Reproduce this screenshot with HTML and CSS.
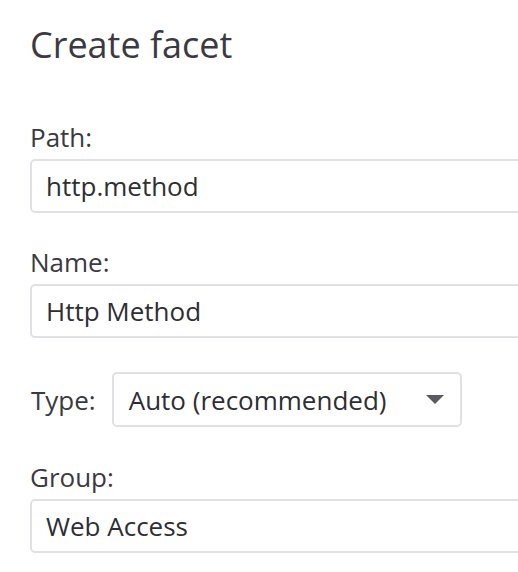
FILE: index.html
```html
<!DOCTYPE html>
<html>
<head>
<meta charset="utf-8">
<link rel="stylesheet" href="styles.css">
</head>
<body>
<div class="panel">
  <h1 class="title">Create facet</h1>
  <div class="field field-path">
    <label class="label">Path:</label>
    <input class="text-input" type="text" value="http.method">
  </div>
  <div class="field field-name">
    <label class="label">Name:</label>
    <input class="text-input" type="text" value="Http Method">
  </div>
  <div class="type-row">
    <span class="label inline">Type:</span>
    <div class="select">
      <span class="select-value">Auto (recommended)</span>
      <svg class="caret" width="18" height="9" viewBox="0 0 18 9"><path d="M0 0 H18 L9 9 Z" fill="#5a5a60"/></svg>
    </div>
  </div>
  <div class="field field-group">
    <label class="label">Group:</label>
    <input class="text-input" type="text" value="Web Access">
  </div>
</div>
</body>
</html>
```

FILE: styles.css
```css
html, body {
  margin: 0;
  padding: 0;
  overflow: hidden;
  background: #ffffff;
}
body {
  font-family: "Open Sans", "Noto Sans", sans-serif;
  color: #333338;
}
.panel {
  padding: 20px 0 0 30px;
  width: 620px;
}
.title {
  margin: 0;
  font-size: 36px;
  font-weight: 400;
  line-height: 49px;
  color: #3a3a40;
}
.label {
  display: block;
  font-size: 26px;
  line-height: 36px;
  margin: 0 0 4px 0;
  color: #3a3a40;
}
.label.inline {
  display: inline-block;
  margin: 0 16px 0 1px;
}
.field-path { margin-top: 50px; }
.field-name { margin-top: 31px; }
.field-group { margin-top: 32px; }
.text-input {
  display: block;
  box-sizing: border-box;
  width: 600px;
  height: 54px;
  margin: 0;
  padding: 0 14px;
  border: 2px solid #e1e1e5;
  border-radius: 5px;
  font-family: "Open Sans", "Noto Sans", sans-serif;
  font-size: 26px;
  color: #2e2e33;
  background: #fff;
  outline: none;
}
.type-row {
  display: flex;
  align-items: center;
  margin-top: 34px;
}
.select {
  box-sizing: border-box;
  width: 350px;
  height: 55px;
  border: 2px solid #e1e1e5;
  border-radius: 5px;
  display: flex;
  align-items: center;
  justify-content: space-between;
  padding: 0 16px 0 15px;
  font-size: 26px;
  color: #2e2e33;
}
.caret {
  display: block;
}
```
